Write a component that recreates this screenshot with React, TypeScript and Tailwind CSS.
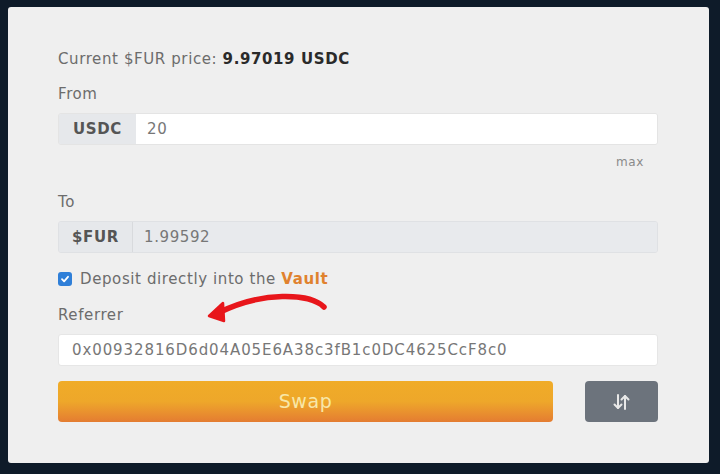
import React from "react";

export default function App() {
  return (
    <div className="w-[720px] h-[474px] bg-[#0e1b29] pt-[7px] pl-[8px] overflow-hidden tracking-[0.6px]" style={{ fontFamily: '"DejaVu Sans", "Open Sans", sans-serif' }}>
      <div className="w-[701px] h-[456px] bg-[#efefef] rounded-[3px] pl-[50px] pr-[51px] pt-[42px] relative">
        <div className="text-[15px] text-[#6c6c6c] leading-[20px]">
          Current $FUR price: <span className="font-bold text-[#2a2a2a]">9.97019 USDC</span>
        </div>
        <div className="mt-[15px] text-[15px] text-[#6c6c6c] leading-[20px]">From</div>
        <div className="mt-[9px] flex h-[32px] rounded-[3px] overflow-hidden border border-[#e4e4e4]">
          <div className="w-[77px] bg-[#e6e8eb] flex items-center justify-center text-[15px] font-bold text-[#555]">USDC</div>
          <div className="flex-1 bg-white flex items-center pl-[11px] text-[15px] text-[#777]">20</div>
        </div>
        <div className="flex justify-end pr-[14px] mt-[9px] text-[12px] text-[#8a8a8a] leading-[16px]">max</div>
        <div className="mt-[22px] text-[15px] text-[#6c6c6c] leading-[20px]">To</div>
        <div className="mt-[9px] flex h-[32px] rounded-[3px] overflow-hidden border border-[#dfe1e4]">
          <div className="w-[74px] bg-[#e6e8eb] flex items-center justify-center text-[15px] font-bold text-[#555] border-r border-[#d8dadd]">$FUR</div>
          <div className="flex-1 bg-[#e8eaed] flex items-center pl-[11px] text-[15px] text-[#777]">1.99592</div>
        </div>
        <div className="mt-[17px] flex items-center h-[18px]">
          <div className="w-[14px] h-[14px] rounded-[3px] bg-[#2f7fd8] flex items-center justify-center">
            <svg width="10" height="10" viewBox="0 0 10 10"><path d="M2 5.2 L4.1 7.3 L8 2.8" stroke="white" strokeWidth="1.8" fill="none" strokeLinecap="round" strokeLinejoin="round" /></svg>
          </div>
          <span className="ml-[8px] text-[15px] text-[#6c6c6c]">
            Deposit directly into the <span className="font-bold text-[#e0822e]">Vault</span>
          </span>
        </div>
        <div className="mt-[17px] text-[15px] text-[#6c6c6c] leading-[20px] relative">
          Referrer
          <svg className="absolute left-[148px] top-[-14px]" width="124" height="32" viewBox="0 0 124 32">
            <path d="M118 16 C 104 2, 56 0, 12 22" stroke="#e8161b" strokeWidth="5.5" fill="none" strokeLinecap="round" />
            <path d="M3 25 L 17 12 L 18 30 Z" fill="#e8161b" stroke="#e8161b" strokeWidth="2.5" strokeLinejoin="round" />
          </svg>
        </div>
        <div className="mt-[9px] h-[32px] bg-white rounded-[3px] border border-[#e6e6e6] flex items-center pl-[13px] text-[15px] text-[#777] tracking-[0.9px]">
          0x00932816D6d04A05E6A38c3fB1c0DC4625CcF8c0
        </div>
        <div className="mt-[15px] flex justify-between">
          <div className="w-[495px] h-[41px] rounded-[4px] bg-gradient-to-b from-[#f0ac28] via-[#eea72a] to-[#e47c31] flex items-center justify-center text-[19px] text-[#f8e7a8]">
            Swap
          </div>
          <div className="w-[73px] h-[41px] rounded-[4px] bg-[#6c737c] flex items-center justify-center">
            <svg width="20" height="18" viewBox="0 0 20 18" fill="none" stroke="#e8e8e8" strokeWidth="2" strokeLinecap="round" strokeLinejoin="round">
              <path d="M6 2 V15" />
              <path d="M2.5 11.5 L6 15 L9.5 11.5" />
              <path d="M13 16 V3" />
              <path d="M9.5 6.5 L13 3 L16.5 6.5" />
            </svg>
          </div>
        </div>
      </div>
    </div>
  );
}
